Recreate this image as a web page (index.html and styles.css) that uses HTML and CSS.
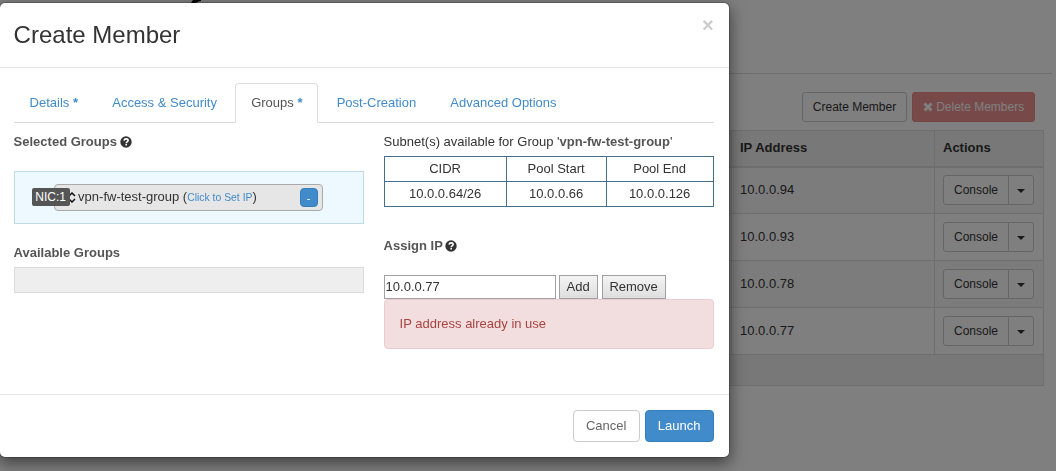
FILE: index.html
```
<!doctype html>
<html lang="en">
  <head>
    <meta charset="UTF-8" />
    <meta name="viewport" content="width=device-width, initial-scale=1.0" />
    <title>Create Member</title>
    <link rel="stylesheet" href="styles.css">
  </head>
  <body>
    <div class="page">
      <div class="page-header"><svg class="heading-mark" viewBox="0 0 12 4"><path d="M0 3 L2 0 H10 V1 L7.500 1.500 L5 3 Z" /></svg></div>
      <div class="table-actions">
        <button class="btn btn-sm">Create Member</button>
        <button class="btn btn-sm btn-danger" disabled>
          <svg class="icon-remove" viewBox="0 0 10 10"><path d="M1.500 1.500l7 7M8.500 1.500l-7 7" /></svg>
          Delete Members
        </button>
      </div>
      <table class="members">
        <thead>
          <tr><th class="col-name"></th><th class="col-ip">IP Address</th><th>Actions</th></tr>
        </thead>
        <tbody>
          <tr>
            <td></td>
            <td>10.0.0.94</td>
            <td><div class="btn-group"><button class="btn btn-sm">Console</button><button class="btn btn-sm toggle"><span class="caret"></span></button></div></td>
          </tr>
          <tr>
            <td></td>
            <td>10.0.0.93</td>
            <td><div class="btn-group"><button class="btn btn-sm">Console</button><button class="btn btn-sm toggle"><span class="caret"></span></button></div></td>
          </tr>
          <tr>
            <td></td>
            <td>10.0.0.78</td>
            <td><div class="btn-group"><button class="btn btn-sm">Console</button><button class="btn btn-sm toggle"><span class="caret"></span></button></div></td>
          </tr>
          <tr>
            <td></td>
            <td>10.0.0.77</td>
            <td><div class="btn-group"><button class="btn btn-sm">Console</button><button class="btn btn-sm toggle"><span class="caret"></span></button></div></td>
          </tr>
        </tbody>
        <tfoot>
          <tr><td colspan="3"></td></tr>
        </tfoot>
      </table>
    </div>

    <div class="modal-backdrop"></div>

    <div class="modal">
      <div class="modal-header">
        <h3>Create Member</h3>
        <button class="close">×</button>
      </div>
      <div class="modal-body">
        <ul class="nav-tabs">
          <li><a>Details <b>*</b></a></li>
          <li><a>Access &amp; Security</a></li>
          <li class="active"><a>Groups <b>*</b></a></li>
          <li><a>Post-Creation</a></li>
          <li><a>Advanced Options</a></li>
        </ul>
        <div class="tab-content">
          <div class="groups">
            <label>Selected Groups <svg class="icon-help" viewBox="0 0 12 12"><circle cx="6" cy="6" r="5.7" /><path d="M4.1 4.6C4.2 3.3 5 2.9 6.1 2.9c1.200 0 2 .6 2 1.600C8.100 5.900 6.200 5.800 6.200 7.200" /><path d="M6.200 8.100v1.500" /></svg></label>
            <ul class="selected-list">
              <li>
                <span class="nic">NIC:1</span>
                <svg class="icon-sort" viewBox="0 0 8 11"><path d="M1 4l3-3 3 3M1 7l3 3 3-3" /></svg>
                <span class="group-name">vpn-fw-test-group (<a>Click to Set IP</a>)</span>
                <button class="btn-remove">-</button>
              </li>
            </ul>
            <label>Available Groups</label>
            <ul class="available-list"></ul>
          </div>
          <div class="subnets">
            <p>Subnet(s) available for Group '<b>vpn-fw-test-group</b>'</p>
            <table class="subnet-table">
              <tr><td class="cidr">CIDR</td><td class="start">Pool Start</td><td>Pool End</td></tr>
              <tr><td>10.0.0.64/26</td><td>10.0.0.66</td><td>10.0.0.126</td></tr>
            </table>
            <label>Assign IP <svg class="icon-help" viewBox="0 0 12 12"><circle cx="6" cy="6" r="5.7" /><path d="M4.1 4.6C4.2 3.3 5 2.9 6.1 2.9c1.200 0 2 .6 2 1.600C8.100 5.900 6.200 5.800 6.200 7.200" /><path d="M6.200 8.100v1.500" /></svg></label>
            <div class="assign">
              <input type="text" value="10.0.0.77">
              <button class="add">Add</button>
              <button class="remove">Remove</button>
            </div>
            <div class="alert">IP address already in use</div>
          </div>
        </div>
      </div>
      <div class="modal-footer">
        <button class="btn btn-cancel">Cancel</button>
        <button class="btn btn-primary">Launch</button>
      </div>
    </div>
  </body>
</html>
```
FILE: styles.css
```
* {
  box-sizing: border-box;
}
body {
  margin: 0;
  height: 471px;
  overflow: hidden;
  background: #fff;
  font-family: "Liberation Sans", Arial, sans-serif;
  font-size: 13px;
  line-height: 18px;
  color: #333;
}
button,
input {
  font-family: inherit;
  font-size: 13px;
  color: #333;
}
ul {
  list-style: none;
  margin: 0;
  padding: 0;
}
label {
  display: block;
  font-weight: bold;
  color: #555;
}

/* page behind the dialog */
.page {
  padding-right: 12px;
}
.page-header {
  height: 74px;
  margin-right: -8px;
  border-bottom: 1px solid #ddd;
}
.heading-mark {
  display: block;
  width: 12px;
  height: 4px;
  margin-left: 191px;
}
.table-actions {
  display: flex;
  justify-content: flex-end;
  gap: 5px;
  padding: 18px 9px 8px 0;
}
.btn {
  border: 1px solid #ccc;
  border-radius: 4px;
  background: #fff;
  padding: 0;
}
.btn-sm {
  height: 30px;
  width: 105px;
  font-size: 12px;
  border-radius: 3px;
}
.btn-danger {
  width: 123px;
  background: #ee9292;
  border-color: #ee8686;
  color: #fff;
}
.icon-remove {
  width: 10px;
  height: 10px;
  vertical-align: -1px;
  fill: none;
  stroke: #fff;
  stroke-width: 3;
}
.members {
  width: 100%;
  border-collapse: collapse;
  table-layout: fixed;
  border: 1px solid #ddd;
}
.members th,
.members td {
  height: 47px;
  padding: 0 8px;
  text-align: left;
  border: 1px solid #ddd;
}
.members th {
  height: 36px;
  background: #f0f0f0;
  border-bottom: 2px solid #ddd;
}
.members .col-name {
  width: 731px;
}
.members .col-ip {
  width: 203px;
}
.members tbody tr:nth-child(odd) {
  background: #f9f9f9;
}
.members tfoot td {
  height: 31px;
  background: #f0f0f0;
}
.btn-group {
  display: flex;
}
.btn-group .btn {
  width: 66px;
  border-radius: 3px 0 0 3px;
}
.btn-group .toggle {
  width: 26px;
  margin-left: -1px;
  border-radius: 0 3px 3px 0;
}
.caret {
  display: inline-block;
  border: 4px solid transparent;
  border-top-color: #333;
  border-bottom: 0;
  vertical-align: middle;
}
.modal-backdrop {
  position: fixed;
  inset: 0;
  background: rgba(0, 0, 0, 0.5);
}

/* dialog */
.modal {
  position: absolute;
  top: 2px;
  left: -1.4px;
  width: 731px;
  height: 456px;
  background: #fff;
  background-clip: padding-box;
  border: 1px solid rgba(0, 0, 0, 0.2);
  border-radius: 6px;
  box-shadow: 0 5px 15px rgba(0, 0, 0, 0.5);
}
.modal-header {
  display: flex;
  justify-content: space-between;
  align-items: flex-start;
  height: 65px;
  padding: 15px 15px 0 14px;
  border-bottom: 1px solid #e5e5e5;
}
.modal-header h3 {
  margin: 3px 0 0;
  font-size: 24px;
  font-weight: normal;
  line-height: 28px;
}
.close {
  padding: 0;
  border: 0;
  background: none;
  color: #ccc;
  font-size: 20px;
  font-weight: bold;
  line-height: 15px;
}
.modal-body {
  height: 326px;
  padding: 15px 15px 0 14px;
}
.nav-tabs {
  display: flex;
  gap: 2.2px;
  height: 40px;
  border-bottom: 1px solid #ddd;
}
.nav-tabs li {
  height: 40px;
  padding: 10px 15px 0;
  border: 1px solid transparent;
}
.nav-tabs a,
.nav-tabs b,
.group-name a {
  color: #428bca;
}
.nav-tabs .active {
  border-color: #ddd;
  border-bottom-color: #fff;
  border-radius: 4px 4px 0 0;
  background: #fff;
}
.nav-tabs .active a {
  color: #555;
}
.tab-content {
  display: grid;
  grid-template-columns: 350px 330px;
  gap: 20px;
  padding-top: 10px;
}
.icon-help {
  width: 12px;
  height: 12px;
  margin-left: -1px;
  vertical-align: -1.5px;
  fill: #333;
}
.icon-help path {
  fill: none;
  stroke: #fff;
  stroke-width: 1.6;
}
.selected-list {
  height: 53px;
  margin: 20px 0;
  padding: 12px 40px;
  background: #edf9ff;
  border: 1px solid #bfdbe5;
}
.selected-list li {
  position: relative;
  display: flex;
  align-items: center;
  width: 269px;
  height: 27px;
  margin-left: -1px;
  padding: 0 4px 0 13px;
  background: #e6e6e6;
  border: 1px solid #aaa;
  border-radius: 4px;
}
.nic {
  position: absolute;
  left: -23px;
  top: 3px;
  width: 38px;
  height: 18px;
  border-radius: 2px;
  background: #555;
  color: #fff;
  font-size: 12px;
  text-align: center;
}
.icon-sort {
  width: 8px;
  height: 11px;
  margin-right: 2.5px;
  fill: none;
  stroke: #111;
  stroke-width: 1.5;
}
.group-name {
  margin-top: -1px;
}
.group-name a {
  font-size: 10.4px;
}
.btn-remove {
  width: 18px;
  height: 19px;
  margin-left: auto;
  padding: 0;
  background: #428bca;
  border: 1px solid #357ebd;
  border-radius: 4px;
  color: #fff;
  font-size: 11px;
}
.available-list {
  height: 26px;
  margin-top: 5px;
  background: #eee;
  border: 1px solid #ddd;
}
.subnets p {
  margin: 0 0 5px;
}
.subnets b {
  color: #555;
}
.subnet-table {
  width: 330px;
  margin-bottom: 30px;
  border-collapse: collapse;
  table-layout: fixed;
}
.subnet-table td {
  height: 25px;
  padding: 0;
  text-align: center;
  border: 1px solid #456f8a;
}
.cidr {
  width: 122px;
}
.start {
  width: 100px;
}
.assign {
  display: flex;
  margin-top: 20px;
}
.assign input {
  width: 172px;
  height: 24px;
  margin-right: 3px;
  padding: 0 1px 1px;
  border: 1px solid #a0a0a0;
}
.assign button {
  height: 24px;
  padding: 0 0 1px;
  border: 1px solid #a0a0a0;
  background: linear-gradient(#f4f4f4, #dedede);
}
.assign .add {
  width: 39px;
  margin-right: 4px;
}
.assign .remove {
  width: 64px;
}
.alert {
  height: 50px;
  padding: 15px;
  background: #f2dede;
  border: 1px solid #ebccd1;
  border-radius: 4px;
  color: #a94442;
}
.modal-footer {
  display: flex;
  justify-content: flex-end;
  gap: 5px;
  padding: 15px;
  border-top: 1px solid #e5e5e5;
}
.modal-footer .btn {
  width: 67px;
  height: 32px;
  padding-bottom: 1px;
  color: #666;
}
.modal-footer .btn-primary {
  width: 69px;
  background: #428bca;
  border-color: #357ebd;
  color: #fff;
}
```
